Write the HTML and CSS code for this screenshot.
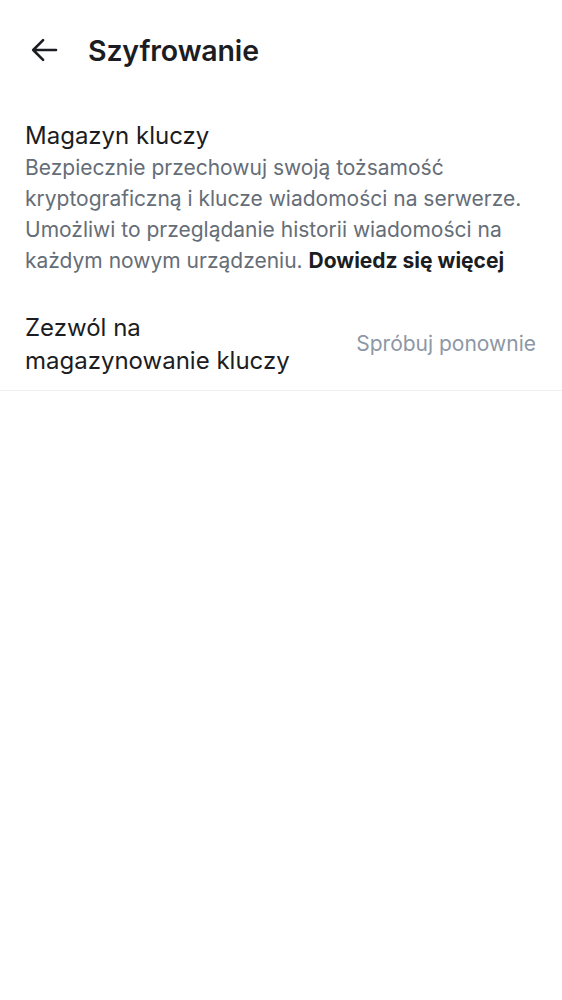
FILE: index.html
```html
<!DOCTYPE html>
<html lang="pl">
<head>
<meta charset="utf-8">
<link rel="stylesheet" href="styles.css">
</head>
<body>
<header class="topbar">
  <button class="back" aria-label="Wstecz">
    <svg width="36" height="36" viewBox="0 0 24 24"><path d="M20 12H4.8M11.4 5.4L4.8 12l6.6 6.6" fill="none" stroke="#1b1d22" stroke-width="1.75" stroke-linecap="round" stroke-linejoin="round"/></svg>
  </button>
  <h1 class="title">Szyfrowanie</h1>
</header>
<section class="section">
  <h2 class="section-title">Magazyn kluczy</h2>
  <p class="section-desc">Bezpiecznie przechowuj swoją tożsamość kryptograficzną i klucze wiadomości na serwerze. Umożliwi to przeglądanie historii wiadomości na każdym nowym urządzeniu. <strong>Dowiedz się więcej</strong></p>
</section>
<div class="row">
  <div class="row-label">Zezwól na<br>magazynowanie kluczy</div>
  <div class="row-action">Spróbuj ponownie</div>
</div>
</body>
</html>
```
FILE: styles.css
```css
* { box-sizing: border-box; }
body {
  margin: 0;
  background: #ffffff;
  font-family: "Inter", "Roboto", sans-serif;
  color: #1b1d22;
}
.topbar {
  display: flex;
  align-items: center;
  height: 100px;
  padding: 0 0 0 26px;
}
.back {
  border: 0;
  background: none;
  padding: 0;
  width: 36px;
  height: 36px;
  display: flex;
}
.title {
  margin: 0 0 0 26px;
  font-size: 28.5px;
  font-weight: 600;
  letter-spacing: -0.15px;
}
.section {
  padding: 18.5px 25px 0 25px;
}
.section-title {
  margin: 0;
  font-size: 24px;
  font-weight: 400;
  line-height: 33px;
}
.section-desc {
  margin: 0;
  font-size: 21px;
  line-height: 31.3px;
  color: #656d77;
}
.section-desc strong {
  color: #1b1d22;
  font-weight: 700;
}
.row {
  display: flex;
  align-items: center;
  justify-content: space-between;
  padding: 34px 26px 13px 25px;
  border-bottom: 1.5px solid #f0f0f4;
}
.row-label {
  font-size: 24px;
  line-height: 33px;
}
.row-action {
  font-size: 21px;
  color: #8d97a5;
}
```
